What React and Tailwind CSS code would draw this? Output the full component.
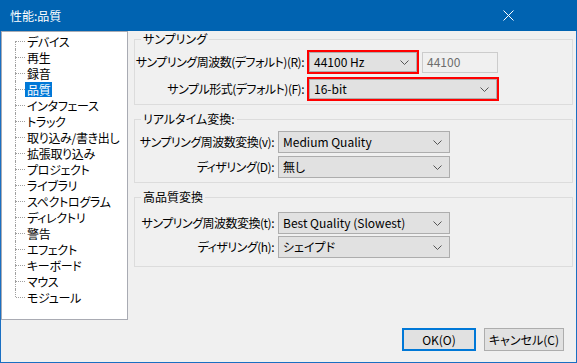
import React from 'react';

// 左側のツリー項目
const treeItems = [
  'デバイス', '再生', '録音', '品質', 'インタフェース', 'トラック', '取り込み/書き出し',
  '拡張取り込み', 'プロジェクト', 'ライブラリ', 'スペクトログラム', 'ディレクトリ',
  '警告', 'エフェクト', 'キーボード', 'マウス', 'モジュール',
];

const Chevron = () => (
  <svg width="9" height="5" viewBox="0 0 9 5" className="shrink-0">
    <path d="M0.5 0.5 L4.5 4.5 L8.5 0.5" fill="none" stroke="#555" strokeWidth="1" />
  </svg>
);

const Combo = ({ value, className }) => (
  <div className={`flex items-center justify-between bg-[#e1e1e1] border border-[#adadad] pl-[4px] pr-[7px] ${className}`}>
    <span className="whitespace-nowrap">{value}</span>
    <Chevron />
  </div>
);

const TreeRow = ({ label, first, last, selected }) => (
  <div className="flex items-center h-[16px]">
    <div className="flex flex-col w-px h-[16px]">
      <div className={`h-[8px] ${first ? '' : 'border-l border-dotted border-[#a0a0a0]'}`} />
      <div className={`h-[8px] ${last ? '' : 'border-l border-dotted border-[#a0a0a0]'}`} />
    </div>
    <div className="w-[9px] border-t border-dotted border-[#a0a0a0]" />
    <span className={`px-[2px] leading-[15px] whitespace-nowrap tracking-[-0.3px] ${selected ? 'bg-[#0078d7] text-white' : 'text-black'}`}>
      {label}
    </span>
  </div>
);

const Row = ({ label, labelWidth, children }) => (
  <div className="flex items-center">
    <div className={`${labelWidth} shrink-0 flex justify-end`}>
      <span className="whitespace-nowrap tracking-[-0.5px]">{label}</span>
    </div>
    {children}
  </div>
);

export default function App() {
  return (
    <div className="w-[577px] h-[363px] flex flex-col bg-[#f0f0f0] border-x border-b border-[#1a6fc2] text-[12px] text-black [font-family:'Noto_Sans_CJK_JP','Noto_Sans',sans-serif] [font-feature-settings:'palt']">
      {/* タイトルバー */}
      <div className="h-[31px] shrink-0 -mx-px bg-[#0063b1] flex items-center justify-between text-white">
        <span className="pl-[10px]">性能:品質</span>
        <div className="w-[46px] h-[31px] flex items-center justify-center mr-[46px]">
          <svg width="11" height="11" viewBox="0 0 11 11">
            <path d="M0.5 0.5 L10.5 10.5 M10.5 0.5 L0.5 10.5" stroke="white" strokeWidth="1" />
          </svg>
        </div>
      </div>

      <div className="flex flex-1 min-h-0">
        {/* ツリー */}
        <div className="w-[127px] h-[289px] shrink-0 bg-white border border-[#a9abb3] pt-[1px] pl-[13px]">
          {treeItems.map((t, i) => (
            <TreeRow key={t} label={t} first={i === 0} last={i === treeItems.length - 1} selected={t === '品質'} />
          ))}
        </div>

        {/* 設定 */}
        <div className="flex-1 flex flex-col pl-[6px] pr-[3px]">
          <fieldset className="border border-[#dcdcdc] pb-[3px]">
            <legend className="ml-[6px] px-[2px] leading-[16px]">サンプリング</legend>
            <div className="flex flex-col gap-[3px] pt-[3px]">
              <Row label="サンプリング周波数(デフォルト)(R):" labelWidth="w-[169px]">
                <div className="ml-[3px] border-2 border-[#ff0000] w-[112px] h-[24px]">
                  <Combo value="44100 Hz" className="h-[20px]" />
                </div>
                <div className="ml-[3px] w-[76px] h-[21px] border border-[#cccccc] flex items-center pl-[4px] text-[#6d6d6d]">44100</div>
              </Row>
              <Row label="サンプル形式(デフォルト)(F):" labelWidth="w-[169px]">
                <div className="ml-[3px] border-2 border-[#ff0000] w-[192px] h-[24px]">
                  <Combo value="16-bit" className="h-[20px]" />
                </div>
              </Row>
            </div>
          </fieldset>

          <fieldset className="mt-[6px] border border-[#dcdcdc] pb-[4px]">
            <legend className="ml-[6px] px-[2px] leading-[16px]">リアルタイム変換:</legend>
            <div className="flex flex-col gap-[3px] pt-[4px]">
              <Row label="サンプリング周波数変換(v):" labelWidth="w-[139px]">
                <Combo value="Medium Quality" className="ml-[4px] w-[172px] h-[22px]" />
              </Row>
              <Row label="ディザリング(D):" labelWidth="w-[139px]">
                <Combo value="無し" className="ml-[4px] w-[172px] h-[22px]" />
              </Row>
            </div>
          </fieldset>

          <fieldset className="mt-[6px] border border-[#dcdcdc] pb-[8px]">
            <legend className="ml-[6px] px-[2px] leading-[16px]">高品質変換</legend>
            <div className="flex flex-col gap-[2px] pt-[7px]">
              <Row label="サンプリング周波数変換(t):" labelWidth="w-[139px]">
                <Combo value="Best Quality (Slowest)" className="ml-[4px] w-[172px] h-[22px]" />
              </Row>
              <Row label="ディザリング(h):" labelWidth="w-[139px]">
                <Combo value="シェイプド" className="ml-[4px] w-[172px] h-[22px]" />
              </Row>
            </div>
          </fieldset>

          <div className="flex-1" />

          {/* ボタン */}
          <div className="flex justify-end gap-[8px] pr-[9px] pb-[11px]">
            <button className="w-[74px] h-[23px] bg-[#e1e1e1] border-2 border-[#0078d7] flex items-center justify-center">OK(O)</button>
            <button className="w-[80px] h-[23px] bg-[#e1e1e1] border border-[#adadad] flex items-center justify-center">キャンセル(C)</button>
          </div>
        </div>
      </div>
    </div>
  );
}
